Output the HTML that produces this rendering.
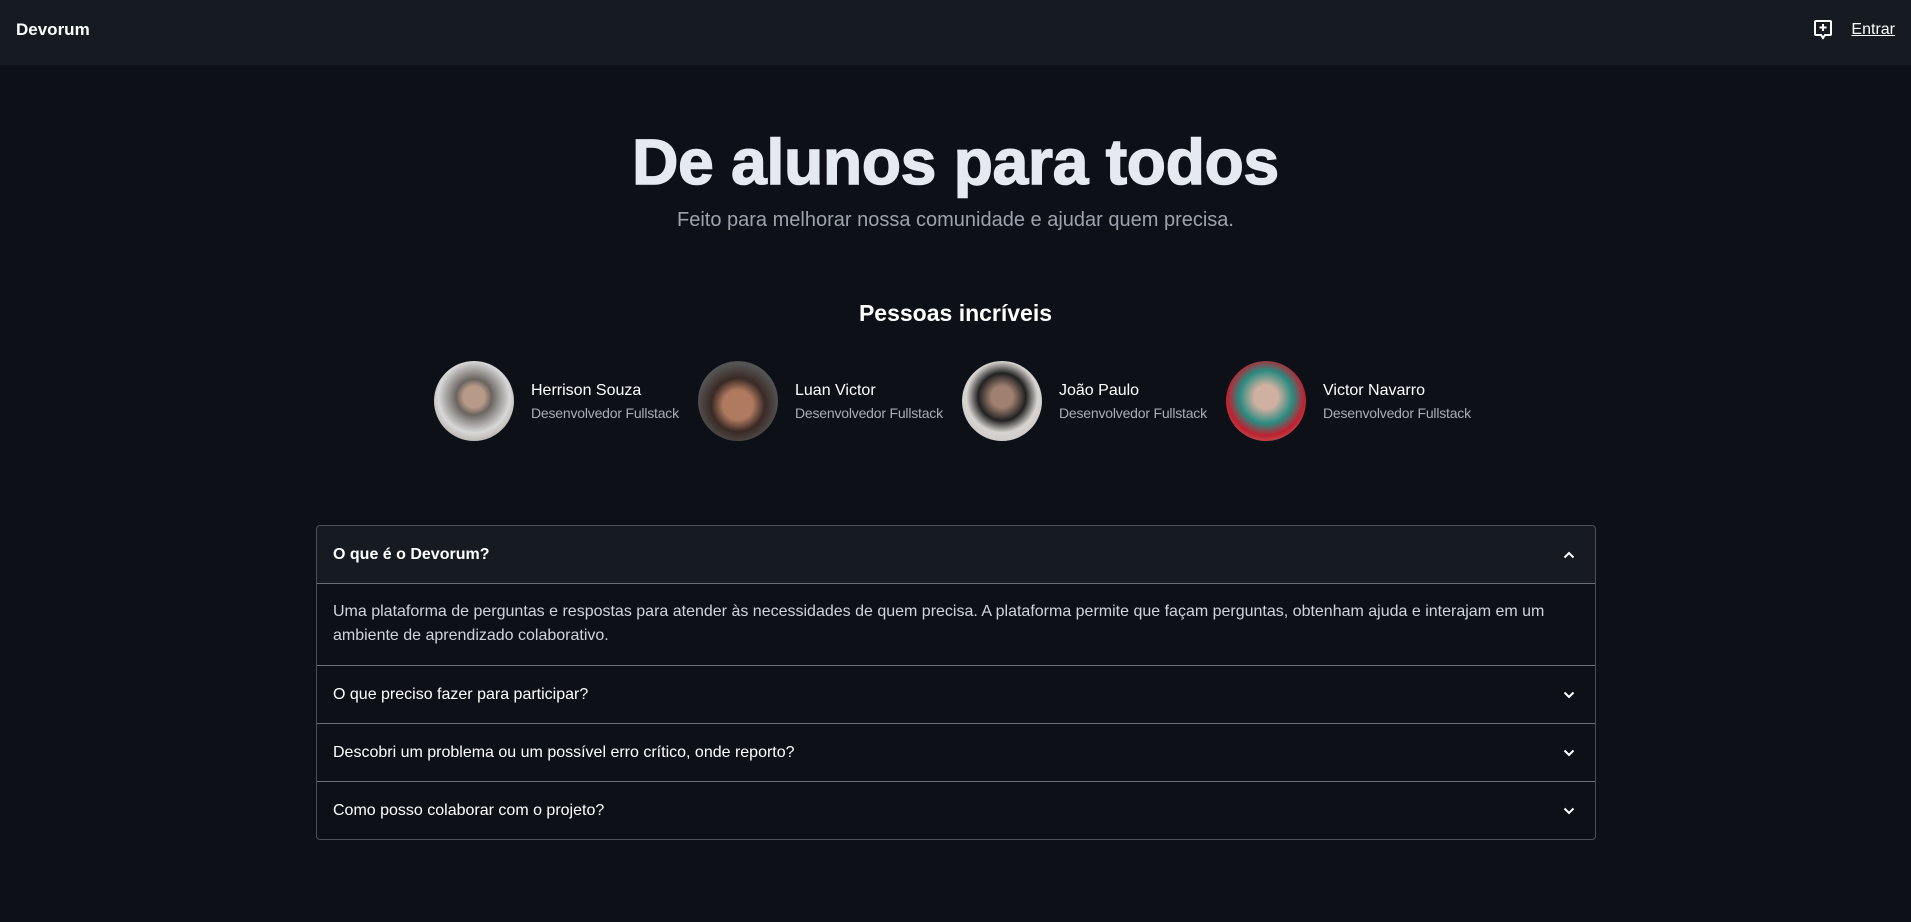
<!DOCTYPE html>
<html><head><meta charset="utf-8"><style>
*{box-sizing:border-box;margin:0;padding:0}
body{width:1911px;height:922px;background:#0d1117;font-family:"Liberation Sans",Arial,sans-serif;color:#e6edf3;overflow:hidden}
header{height:65px;background:#161b22;position:relative}
.logo{position:absolute;left:16px;top:20px;font-weight:bold;font-size:17px;color:#fff}
.right{position:absolute;right:16px;top:19px;display:flex;align-items:center;gap:18px}
.right a{color:#fff;font-size:16px;text-decoration:underline}
h1{position:absolute;left:0;width:100%;top:125px;text-align:center;font-size:64px;font-weight:900;color:#e5e9f0;-webkit-text-stroke:1.5px #e5e9f0;letter-spacing:-0.2px}
.sub{position:absolute;left:0;width:100%;top:209px;text-align:center;font-size:20px;color:#9ca3af}
h2{position:absolute;left:0;width:100%;top:300px;text-align:center;font-size:23px;font-weight:bold;color:#fff}
.people{position:absolute;top:361px;left:434px;display:flex}
.p{width:264px;display:flex;align-items:center}
.av{width:80px;height:80px;border-radius:50%;flex:none;margin-right:17px}
.n{font-size:16px;color:#fff;margin-bottom:5px}
.r{font-size:14px;color:#a8adb5;letter-spacing:-0.2px}
.acc{position:absolute;left:316px;top:525px;width:1280px;border:1px solid #4b5058;border-radius:4px;overflow:hidden}
.row{height:58px;display:flex;align-items:center;justify-content:space-between;padding:0 20px 0 16px;font-size:16px;color:#fff;border-top:1px solid #6b7078}
.row:first-child{border-top:none;background:#161b22;font-weight:bold;height:57px}
.body{border-top:1px solid #6b7078;padding:16px 16px;font-size:16px;line-height:24px;color:#d1d5db;height:82px}
</style></head><body>
<header><div class="logo">Devorum</div>
<div class="right"><svg width="20" height="22" viewBox="0 0 20 22"><path d="M3 2h14a1 1 0 0 1 1 1v12a1 1 0 0 1-1 1h-5l-2 3-2-3H3a1 1 0 0 1-1-1V3a1 1 0 0 1 1-1z" fill="none" stroke="#fff" stroke-width="2"/><path d="M10 5v7M6.5 8.5h7" stroke="#fff" stroke-width="2"/></svg><a>Entrar</a></div></header>
<h1>De alunos para todos</h1>
<div class="sub">Feito para melhorar nossa comunidade e ajudar quem precisa.</div>
<h2>Pessoas incríveis</h2>
<div class="people">
<div class="p"><div class="av" style="background:radial-gradient(circle at 50% 45%,#b89a88 0 18%,#6a6460 30%,#d8d8d8 60%,#8a7a6a)"></div><div><div class="n">Herrison Souza</div><div class="r">Desenvolvedor Fullstack</div></div></div>
<div class="p"><div class="av" style="background:radial-gradient(circle at 50% 55%,#b07a60 0 25%,#3a2a25 45%,#555 70%,#222)"></div><div><div class="n">Luan Victor</div><div class="r">Desenvolvedor Fullstack</div></div></div>
<div class="p"><div class="av" style="background:radial-gradient(circle at 50% 45%,#a08070 0 18%,#222 40%,#d8d4d0 60%,#bbb)"></div><div><div class="n">João Paulo</div><div class="r">Desenvolvedor Fullstack</div></div></div>
<div class="p"><div class="av" style="background:radial-gradient(circle at 50% 45%,#d0b0a0 0 20%,#2a8a80 45%,#c02030 65%,#b8a890)"></div><div><div class="n">Victor Navarro</div><div class="r">Desenvolvedor Fullstack</div></div></div>
</div>
<div class="acc">
<div class="row"><span>O que é o Devorum?</span><svg width="12" height="8" viewBox="0 0 12 8"><path d="M1.5 6.5L6 2l4.5 4.5" fill="none" stroke="#fff" stroke-width="2"/></svg></div>
<div class="body">Uma plataforma de perguntas e respostas para atender às necessidades de quem precisa. A plataforma permite que façam perguntas, obtenham ajuda e interajam em um ambiente de aprendizado colaborativo.</div>
<div class="row"><span>O que preciso fazer para participar?</span><svg width="12" height="8" viewBox="0 0 12 8"><path d="M1.5 1.5L6 6l4.5-4.5" fill="none" stroke="#fff" stroke-width="2"/></svg></div>
<div class="row"><span>Descobri um problema ou um possível erro crítico, onde reporto?</span><svg width="12" height="8" viewBox="0 0 12 8"><path d="M1.5 1.5L6 6l4.5-4.5" fill="none" stroke="#fff" stroke-width="2"/></svg></div>
<div class="row"><span>Como posso colaborar com o projeto?</span><svg width="12" height="8" viewBox="0 0 12 8"><path d="M1.5 1.5L6 6l4.5-4.5" fill="none" stroke="#fff" stroke-width="2"/></svg></div>
</div>
</body></html>
